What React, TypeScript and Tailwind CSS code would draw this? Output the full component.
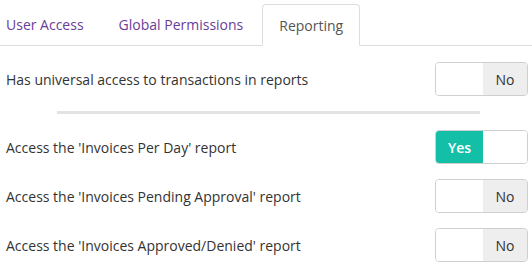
import React from 'react';

type Tab = { label: string; active?: boolean };

const tabs: Tab[] = [
  { label: 'User Access' },
  { label: 'Global Permissions' },
  { label: 'Reporting', active: true },
];

const Toggle: React.FC<{ on: boolean }> = ({ on }) => (
  <div className="flex h-[34px] w-[93px] overflow-hidden rounded-[4px] border border-[#cfcfcf] bg-white">
    <div
      className={
        on
          ? 'flex w-[47px] items-center justify-center bg-[#13bfa6] text-[14px] font-semibold text-white'
          : 'w-[47px] bg-white'
      }
    >
      {on ? 'Yes' : ''}
    </div>
    <div
      className={
        on
          ? 'flex-1 bg-white'
          : 'flex flex-1 items-center justify-center bg-[#eeeeee] text-[14px] text-[#333333]'
      }
    >
      {on ? '' : 'No'}
    </div>
  </div>
);

const Row: React.FC<{ label: string; on: boolean }> = ({ label, on }) => (
  <div className="flex items-center justify-between">
    <span className="text-[14px] text-[#333333]">{label}</span>
    <Toggle on={on} />
  </div>
);

export default function App() {
  return (
    <div className="h-[266px] w-[532px] bg-white font-['Open_Sans',sans-serif]">
      <div className="flex h-[46px] items-end gap-[2px] border-b border-[#dddddd]">
        {tabs.map((tab, i) =>
          tab.active ? (
            <div
              key={tab.label}
              className="-mb-px flex h-[42px] items-center rounded-t-[4px] border border-b-white border-[#dddddd] bg-white px-[16px] text-[14px] text-[#555555]"
            >
              {tab.label}
            </div>
          ) : (
            <div
              key={tab.label}
              className={`flex h-[41px] items-center text-[14px] text-[#6a3d98] ${i === 0 ? 'pl-[6px] pr-[16px]' : 'px-[17px]'}`}
            >
              {tab.label}
            </div>
          )
        )}
      </div>

      <div className="flex flex-col pl-[6px] pr-[4px] pt-[16px]">
        <Row label="Has universal access to transactions in reports" on={false} />
        <div className="ml-[51px] mt-[15px] mb-[16px] h-[3px] w-[423px] bg-[#e3e3e3]" />
        <div className="flex flex-col gap-[15px]">
          <Row label="Access the 'Invoices Per Day' report" on={true} />
          <Row label="Access the 'Invoices Pending Approval' report" on={false} />
          <Row label="Access the 'Invoices Approved/Denied' report" on={false} />
        </div>
      </div>
    </div>
  );
}
